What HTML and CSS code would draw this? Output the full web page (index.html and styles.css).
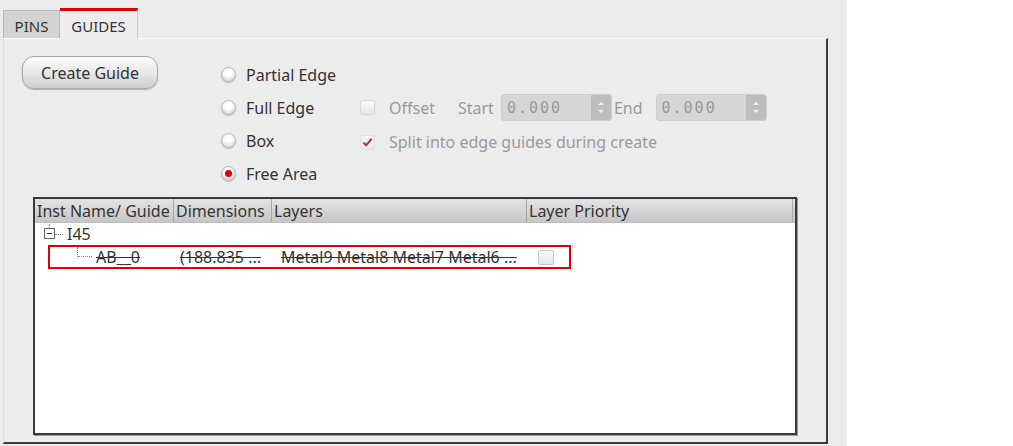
FILE: index.html
```html
<!DOCTYPE html>
<html>
<head>
<meta charset="utf-8">
<link rel="stylesheet" href="styles.css">
</head>
<body>
<div class="app">
  <div class="tabbar">
    <div class="tab tab-pins">PINS</div>
    <div class="tab tab-guides">GUIDES</div>
  </div>
  <div class="panel">
    <div class="controls">
      <div class="btn-cell"><button class="create-btn">Create Guide</button></div>
      <div class="radio-row r1"><span class="radio"></span>Partial Edge</div>
      <div class="radio-row r2"><span class="radio"></span>Full Edge</div>
      <div class="radio-row r3"><span class="radio"></span>Box</div>
      <div class="radio-row r4"><span class="radio checked"></span>Free Area</div>
      <div class="opt-row o2">
        <span class="check"></span>
        <span class="lbl offset">Offset</span>
        <span class="lbl start">Start</span>
        <span class="spin"><span class="spin-val">0.000</span><span class="spin-btns"><span class="up"></span><span class="dn"></span></span></span>
        <span class="lbl end">End</span>
        <span class="spin spin2"><span class="spin-val">0.000</span><span class="spin-btns"><span class="up"></span><span class="dn"></span></span></span>
      </div>
      <div class="opt-row o3">
        <span class="check checked"><svg width="14" height="14" viewBox="0 0 14 14"><path d="M2.5 7.5 L5.5 10.5 L11.5 3.5" fill="none" stroke="#b33a3a" stroke-width="2.2"/></svg></span>
        <span class="lbl">Split into edge guides during create</span>
      </div>
    </div>
    <div class="tree">
      <div class="thead">
        <div class="th c1">Inst Name/ Guide</div>
        <div class="th c2">Dimensions</div>
        <div class="th c3">Layers</div>
        <div class="th c4">Layer Priority</div>
        <div class="th c5"></div>
      </div>
      <div class="tbody">
        <div class="trow row1">
          <span class="expander"></span><span class="hdots"></span><span class="name">I45</span>
        </div>
        <div class="trow row2">
          <span class="vline"></span><span class="hdots2"></span>
          <span class="cell n strike">AB__0</span>
          <span class="cell d strike">(188.835 ...</span>
          <span class="cell l strike">Metal9 Metal8 Metal7 Metal6 ...</span>
          <span class="cell p"><span class="check box"></span></span>
          <span class="sel"></span>
        </div>
      </div>
    </div>
  </div>
</div>
</body>
</html>
```

FILE: styles.css
```css
* { box-sizing: border-box; }
html, body { margin: 0; padding: 0; }
body {
  width: 1013px;
  height: 446px;
  background: #ffffff;
  font-family: "Noto Sans", "Open Sans", sans-serif;
  font-size: 16px;
  color: #333;
  overflow: hidden;
}
.app {
  width: 847px;
  height: 446px;
  background: #ececec;
  display: flex;
  flex-direction: column;
}
.tabbar {
  display: flex;
  align-items: flex-end;
  height: 38px;
  padding-left: 3px;
}
.tab {
  display: flex;
  align-items: center;
  justify-content: center;
  color: #333;
  font-size: 15px;
}
.tab-pins {
  width: 57px;
  height: 28px;
  background: #d3d3d3;
  border: 1px solid #b8b8b8;
  border-bottom: none;
  padding-top: 2px;
}
.tab-guides {
  width: 78px;
  height: 31px;
  background: #eeeeee;
  border-top: 3px solid #e00000;
  border-right: 1px solid #c8c8c8;
  padding-top: 1px;
  position: relative;
  top: 1px;
}
.panel {
  margin-left: 3px;
  width: 825px;
  height: 406px;
  border-top: 1px solid #fbfbfb;
  border-left: 1px solid #dcdcdc;
  border-right: 2px solid #3a3a3a;
  border-bottom: 2px solid #3a3a3a;
  padding: 19px 0 0 0;
}
.controls {
  display: grid;
  grid-template-columns: 217px 139px 1fr;
  grid-template-rows: repeat(4, 33px);
}
.btn-cell {
  grid-column: 1;
  grid-row: 1;
  padding-left: 18px;
}
.create-btn {
  margin-top: -2px;
  width: 136px;
  height: 33px;
  border-radius: 12px;
  border: 1px solid #a8a8a8;
  background: linear-gradient(#fdfdfd, #e6e6e6 55%, #cfcfcf);
  box-shadow: 0 1px 1px rgba(0,0,0,0.25);
  font-family: "Noto Sans", "Open Sans", sans-serif;
  font-size: 16px;
  color: #333;
  padding: 0;
}
.radio-row {
  grid-column: 2;
  display: flex;
  align-items: center;
  gap: 10px;
  color: #333;
}
.r1 { grid-row: 1; }
.r2 { grid-row: 2; }
.r3 { grid-row: 3; }
.r4 { grid-row: 4; }
.radio {
  width: 15px;
  height: 15px;
  border-radius: 50%;
  background: radial-gradient(circle at 50% 35%, #ffffff 30%, #dcdcdc 75%, #b0b0b0);
  border: 1px solid #b5b5b5;
  box-shadow: 0 1px 1px rgba(0,0,0,0.2);
  display: inline-flex;
  align-items: center;
  justify-content: center;
  flex: none;
}
.radio.checked::after {
  content: "";
  width: 7px;
  height: 7px;
  border-radius: 50%;
  background: #e00000;
}
.opt-row {
  grid-column: 3;
  display: flex;
  align-items: center;
  color: #9a9a9a;
}
.o2 { grid-row: 2; }
.o3 { grid-row: 3; padding-top: 3px; }
.check {
  width: 15px;
  height: 15px;
  border: 1px solid #d6d6d6;
  border-radius: 2px;
  background: linear-gradient(#f8f8f8, #e6e6e6);
  margin-right: 14px;
  display: inline-flex;
  align-items: center;
  justify-content: center;
  flex: none;
}
.check.checked { background: linear-gradient(#f4f4f4, #e8e8e8); border-color: #e0e0e0; }
.lbl { color: #9a9a9a; white-space: nowrap; }
.offset { margin-right: 23px; }
.start { margin-right: 7px; }
.spin {
  display: flex;
  width: 111px;
  height: 27px;
  background: #d6d6d6;
  border-radius: 3px;
  border: 1px solid #cdcdcd;
  flex: none;
}
.spin-val {
  flex: 1;
  display: flex;
  align-items: center;
  padding-left: 5px;
  font-family: "DejaVu Sans Mono", monospace;
  font-size: 15px;
  letter-spacing: 2px;
  color: #9a9a9a;
}
.spin-btns {
  width: 20px;
  background: #bdbdbd;
  display: flex;
  flex-direction: column;
  align-items: center;
  justify-content: center;
  gap: 5px;
  border-radius: 0 3px 3px 0;
}
.spin-btns .up, .spin-btns .dn {
  width: 0; height: 0;
  border-left: 3px solid transparent;
  border-right: 3px solid transparent;
}
.spin-btns .up { border-bottom: 3px solid #f0f0f0; }
.spin-btns .dn { border-top: 3px solid #f0f0f0; }
.end { margin-left: 2px; margin-right: 13px; }
.tree {
  margin: 7px 0 0 29px;
  width: 764px;
  height: 238px;
  background: #ffffff;
  border: 2px solid #3a3a3a;
  box-shadow: 1px 1px 0 #9a9a9a;
  display: flex;
  flex-direction: column;
}
.thead {
  display: flex;
  height: 24px;
  background: linear-gradient(#e4e4e4, #c6c6c6);
  border-bottom: 1px solid #bdbdbd;
}
.th {
  display: flex;
  align-items: center;
  padding-left: 2px;
  border-right: 1px solid #a8a8a8;
  color: #333;
  white-space: nowrap;
  overflow: hidden;
}
.c1 { width: 139px; }
.c2 { width: 98px; }
.c3 { width: 255px; }
.c4 { width: 266px; }
.c5 { flex: 1; border-right: none; }
.tbody {
  position: relative;
  flex: 1;
}
.trow {
  display: flex;
  align-items: center;
  position: relative;
}
.row1 { height: 22px; padding-left: 9px; }
.expander {
  width: 11px;
  height: 11px;
  border: 1px solid #666;
  position: relative;
  margin-top: -2px;
}
.expander::after {
  content: "";
  position: absolute;
  left: 2px; right: 2px; top: 4px;
  height: 1px;
  background: #333;
}
.expander::before {
  content: "";
  position: absolute;
  left: 4px; top: -5px;
  height: 4px;
  border-left: 1px dotted #888;
}
.hdots {
  width: 8px;
  border-top: 1px dotted #888;
  margin-right: 4px;
}
.name { color: #333; }
.row2 { height: 24px; padding-left: 43px; }
.vline {
  position: absolute;
  left: 42px;
  top: 2px;
  height: 10px;
  border-left: 1px dotted #888;
}
.hdots2 {
  width: 14px;
  border-top: 1px dotted #888;
  margin-top: -1px;
  margin-right: 4px;
}
.cell { white-space: nowrap; color: #333; }
.strike { text-decoration: line-through; text-decoration-thickness: 1px; }
.n { width: 84px; }
.d { width: 101px; }
.l { width: 257px; }
.p { display: flex; align-items: center; }
.check.box { margin: 0; width: 16px; height: 15px; border-color: #c8c8c8; }
.sel {
  position: absolute;
  left: 13px;
  top: 0;
  width: 523px;
  height: 24px;
  border: 2px solid #e00000;
  pointer-events: none;
}
```
